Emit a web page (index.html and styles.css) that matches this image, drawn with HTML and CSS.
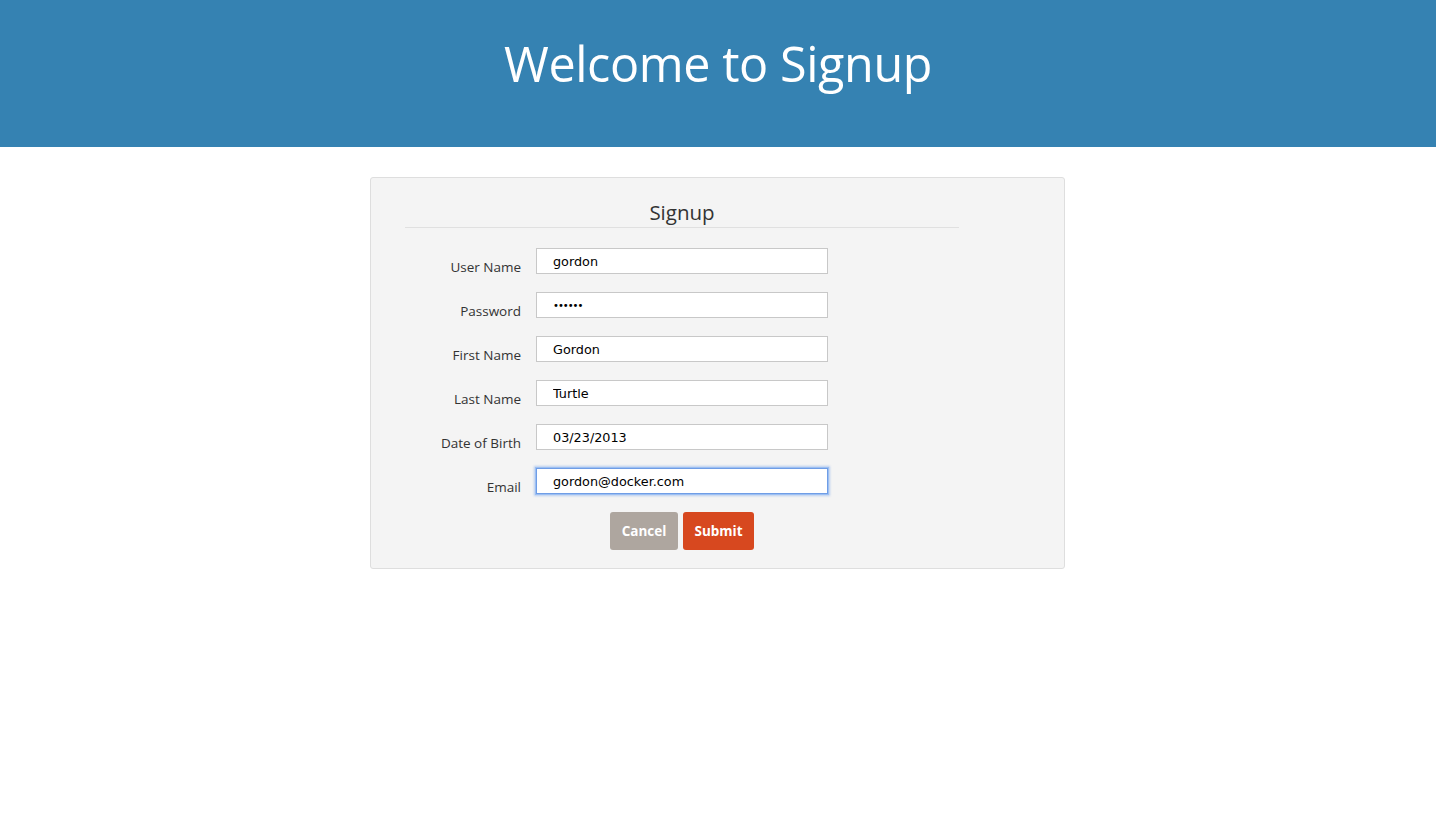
FILE: index.html
```html
<!DOCTYPE html>
<html lang="en">
<head>
<meta charset="utf-8">
<title>Signup</title>
<link rel="stylesheet" href="styles.css">
</head>
<body>
<header class="hero">
  <h1 class="hero-title">Welcome to Signup</h1>
</header>
<main class="page">
  <section class="panel">
    <form class="signup-form">
      <h2 class="form-title">Signup</h2>
      <div class="form-row">
        <label class="form-label" for="username">User Name</label>
        <input class="form-input" id="username" type="text" value="gordon">
      </div>
      <div class="form-row">
        <label class="form-label" for="password">Password</label>
        <input class="form-input" id="password" type="password" value="secret">
      </div>
      <div class="form-row">
        <label class="form-label" for="firstname">First Name</label>
        <input class="form-input" id="firstname" type="text" value="Gordon">
      </div>
      <div class="form-row">
        <label class="form-label" for="lastname">Last Name</label>
        <input class="form-input" id="lastname" type="text" value="Turtle">
      </div>
      <div class="form-row">
        <label class="form-label" for="dob">Date of Birth</label>
        <input class="form-input" id="dob" type="text" value="03/23/2013">
      </div>
      <div class="form-row">
        <label class="form-label" for="email">Email</label>
        <input class="form-input is-focused" id="email" type="text" value="gordon@docker.com">
      </div>
      <div class="form-actions">
        <button type="button" class="btn btn-cancel">Cancel</button>
        <button type="button" class="btn btn-submit">Submit</button>
      </div>
    </form>
  </section>
</main>
</body>
</html>
```

FILE: styles.css
```css
* { box-sizing: border-box; }

body {
  margin: 0;
  background: #ffffff;
  font-family: "Open Sans", "Noto Sans", sans-serif;
  color: #333333;
}

.hero {
  background: #3582b2;
  height: 147px;
  display: flex;
  justify-content: center;
  align-items: flex-start;
}

.hero-title {
  margin: 25px 0 0;
  font-size: 48.5px;
  font-weight: 400;
  line-height: 76px;
  color: #ffffff;
  letter-spacing: -0.4px;
}

.page {
  display: flex;
  justify-content: center;
  padding-top: 30px;
  padding-right: 1px;
}

.panel {
  width: 695px;
  background: #f4f4f4;
  border: 1px solid #dedede;
  border-radius: 3px;
  padding: 0 34px 18px;
}

.signup-form {
  width: 554px;
}

.form-title {
  margin: 0 0 20px;
  padding-top: 21px;
  padding-bottom: 1px;
  font-size: 20.5px;
  font-weight: 400;
  line-height: 27px;
  text-align: center;
  color: #333333;
  border-bottom: 1px solid #e0e0e0;
}

.form-row {
  display: flex;
  align-items: flex-start;
  gap: 15px;
  margin-bottom: 18px;
}

.form-label {
  width: 116px;
  height: 26px;
  text-align: right;
  font-size: 13.5px;
  line-height: 16px;
  padding-top: 11px;
  color: #333333;
  white-space: nowrap;
}

.form-input {
  width: 292px;
  height: 26px;
  border: 1px solid #c8c8c8;
  background: #ffffff;
  padding: 0 0 0 16px;
  font-family: "DejaVu Sans", sans-serif;
  font-size: 12.8px;
  color: #000000;
  outline: none;
  border-radius: 0;
}

#password {
  font-size: 10px;
  letter-spacing: -1px;
}

.form-input.is-focused {
  border: 1px solid #6f9de6;
  box-shadow: 0 0 0 1px #9cbff2, 0 0 2px 2px rgba(110, 160, 235, 0.45);
}

.form-actions {
  display: flex;
  justify-content: center;
  gap: 5px;
}

.btn {
  height: 38px;
  border: none;
  border-radius: 3px;
  color: #ffffff;
  font-family: "Open Sans", "Noto Sans", sans-serif;
  font-weight: 700;
  font-size: 13.5px;
  padding: 0;
  cursor: pointer;
}

.btn-cancel {
  width: 68px;
  background: #aea69f;
}

.btn-submit {
  width: 71px;
  background: #d7481f;
}
```
